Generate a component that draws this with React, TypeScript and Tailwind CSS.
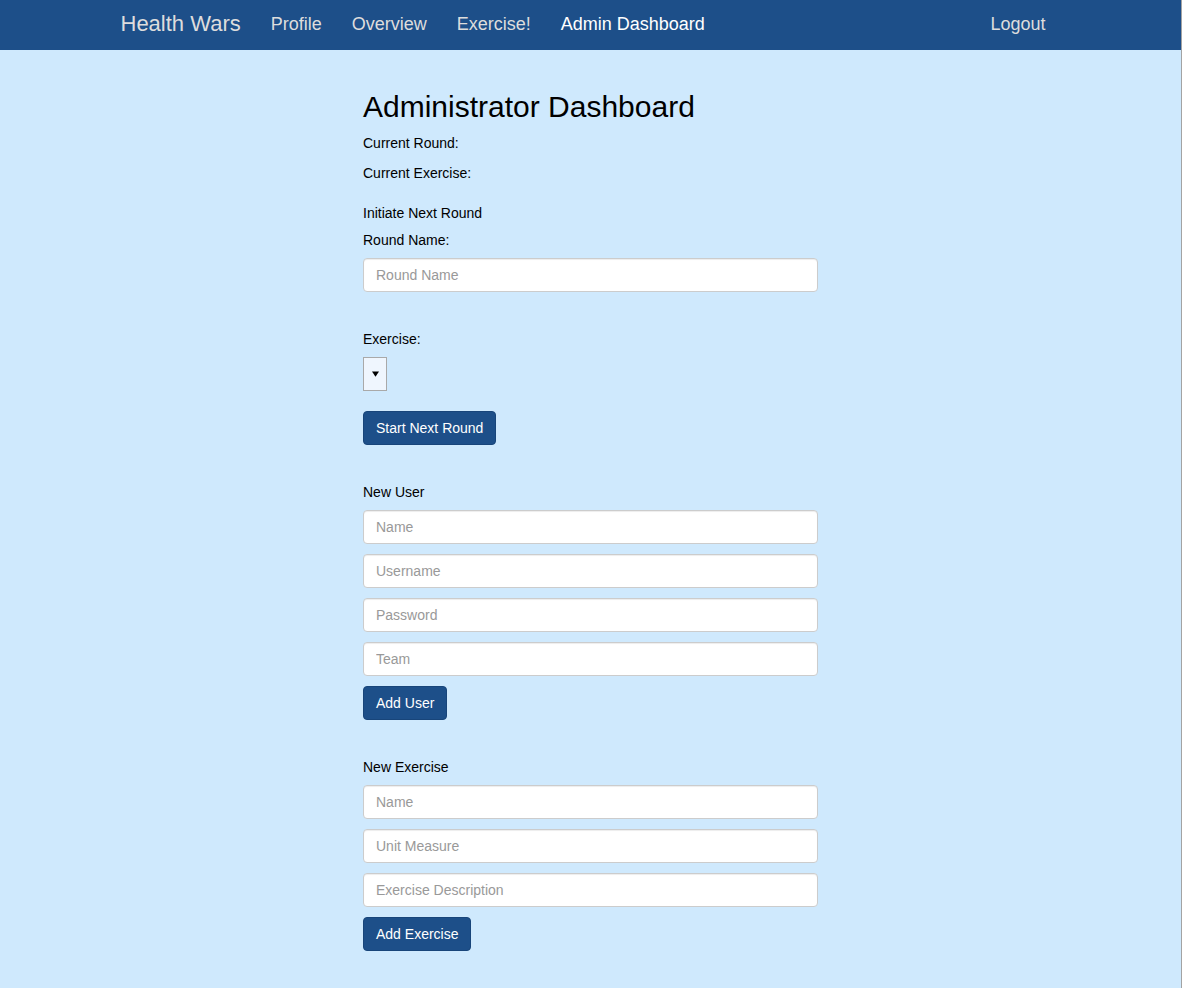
import type { ReactNode } from "react";

const navLinks = [
  { label: "Profile", active: false },
  { label: "Overview", active: false },
  { label: "Exercise!", active: false },
  { label: "Admin Dashboard", active: true },
];

function Field({ placeholder, className = "" }: { placeholder: string; className?: string }) {
  return (
    <input
      type="text"
      placeholder={placeholder}
      className={`block h-[34px] w-full rounded-[4px] border border-[#cccccc] bg-white px-[12px] text-[14px] text-[#555] shadow-[inset_0_1px_1px_rgba(0,0,0,0.075)] outline-none placeholder:text-[#999] ${className}`}
    />
  );
}

function Button({ children, className = "" }: { children: ReactNode; className?: string }) {
  return (
    <button
      type="button"
      className={`block h-[34px] rounded-[4px] border border-[#18457a] bg-[#1d4f89] px-[12px] text-[14px] leading-[20px] text-white ${className}`}
    >
      {children}
    </button>
  );
}

function Text({ children, className = "" }: { children: ReactNode; className?: string }) {
  return <p className={`text-[14px] leading-[20px] text-black ${className}`}>{children}</p>;
}

export default function App() {
  return (
    <div
      className="min-h-screen w-full border-r border-[#a3a3a3] bg-[#cfe9fd] pb-[37px]"
      style={{ fontFamily: '"Liberation Sans", Arial, Helvetica, sans-serif' }}
    >
      <nav className="h-[50px] bg-[#1d4f89]">
        <div className="mx-auto flex h-full w-[970px] items-start px-[15px]">
          <span className="text-[22px] leading-[48px] text-[#dddddd]">Health Wars</span>
          <ul className="ml-[15px] flex">
            {navLinks.map((link) => (
              <li key={link.label}>
                <a
                  href="#"
                  className={`block px-[15px] text-[18px] leading-[48px] ${
                    link.active ? "text-white" : "text-[#dddddd]"
                  }`}
                >
                  {link.label}
                </a>
              </li>
            ))}
          </ul>
          <a href="#" className="ml-auto px-[15px] text-[18px] leading-[48px] text-[#dddddd]">
            Logout
          </a>
        </div>
      </nav>

      <main className="mx-auto w-[455px] pt-[40px]">
        <h2 className="text-[30px] leading-[33px] text-black">Administrator Dashboard</h2>
        <Text className="mt-[10px]">Current Round:</Text>
        <Text className="mt-[10px]">Current Exercise:</Text>

        <section className="mt-[20px]">
          <Text>Initiate Next Round</Text>
          <Text className="mt-[7px]">Round Name:</Text>
          <Field placeholder="Round Name" className="mt-[8px]" />
          <Text className="mt-[37px]">Exercise:</Text>
          <div className="mt-[8px] flex h-[34px] w-[24px] items-center justify-center border border-[#a9a9a9] bg-[#eff6fe]">
            <svg viewBox="0 0 8 6" className="h-[6px] w-[7px]" aria-hidden="true">
              <path d="M0 0h8L4 6Z" fill="#000" />
            </svg>
          </div>
          <Button className="mt-[20px]">Start Next Round</Button>
        </section>

        <section className="mt-[37px]">
          <Text>New User</Text>
          <div className="mt-[8px] flex flex-col gap-[10px]">
            <Field placeholder="Name" />
            <Field placeholder="Username" />
            <Field placeholder="Password" />
            <Field placeholder="Team" />
          </div>
          <Button className="mt-[10px]">Add User</Button>
        </section>

        <section className="mt-[37px]">
          <Text>New Exercise</Text>
          <div className="mt-[8px] flex flex-col gap-[10px]">
            <Field placeholder="Name" />
            <Field placeholder="Unit Measure" />
            <Field placeholder="Exercise Description" />
          </div>
          <Button className="mt-[10px]">Add Exercise</Button>
        </section>
      </main>
    </div>
  );
}
